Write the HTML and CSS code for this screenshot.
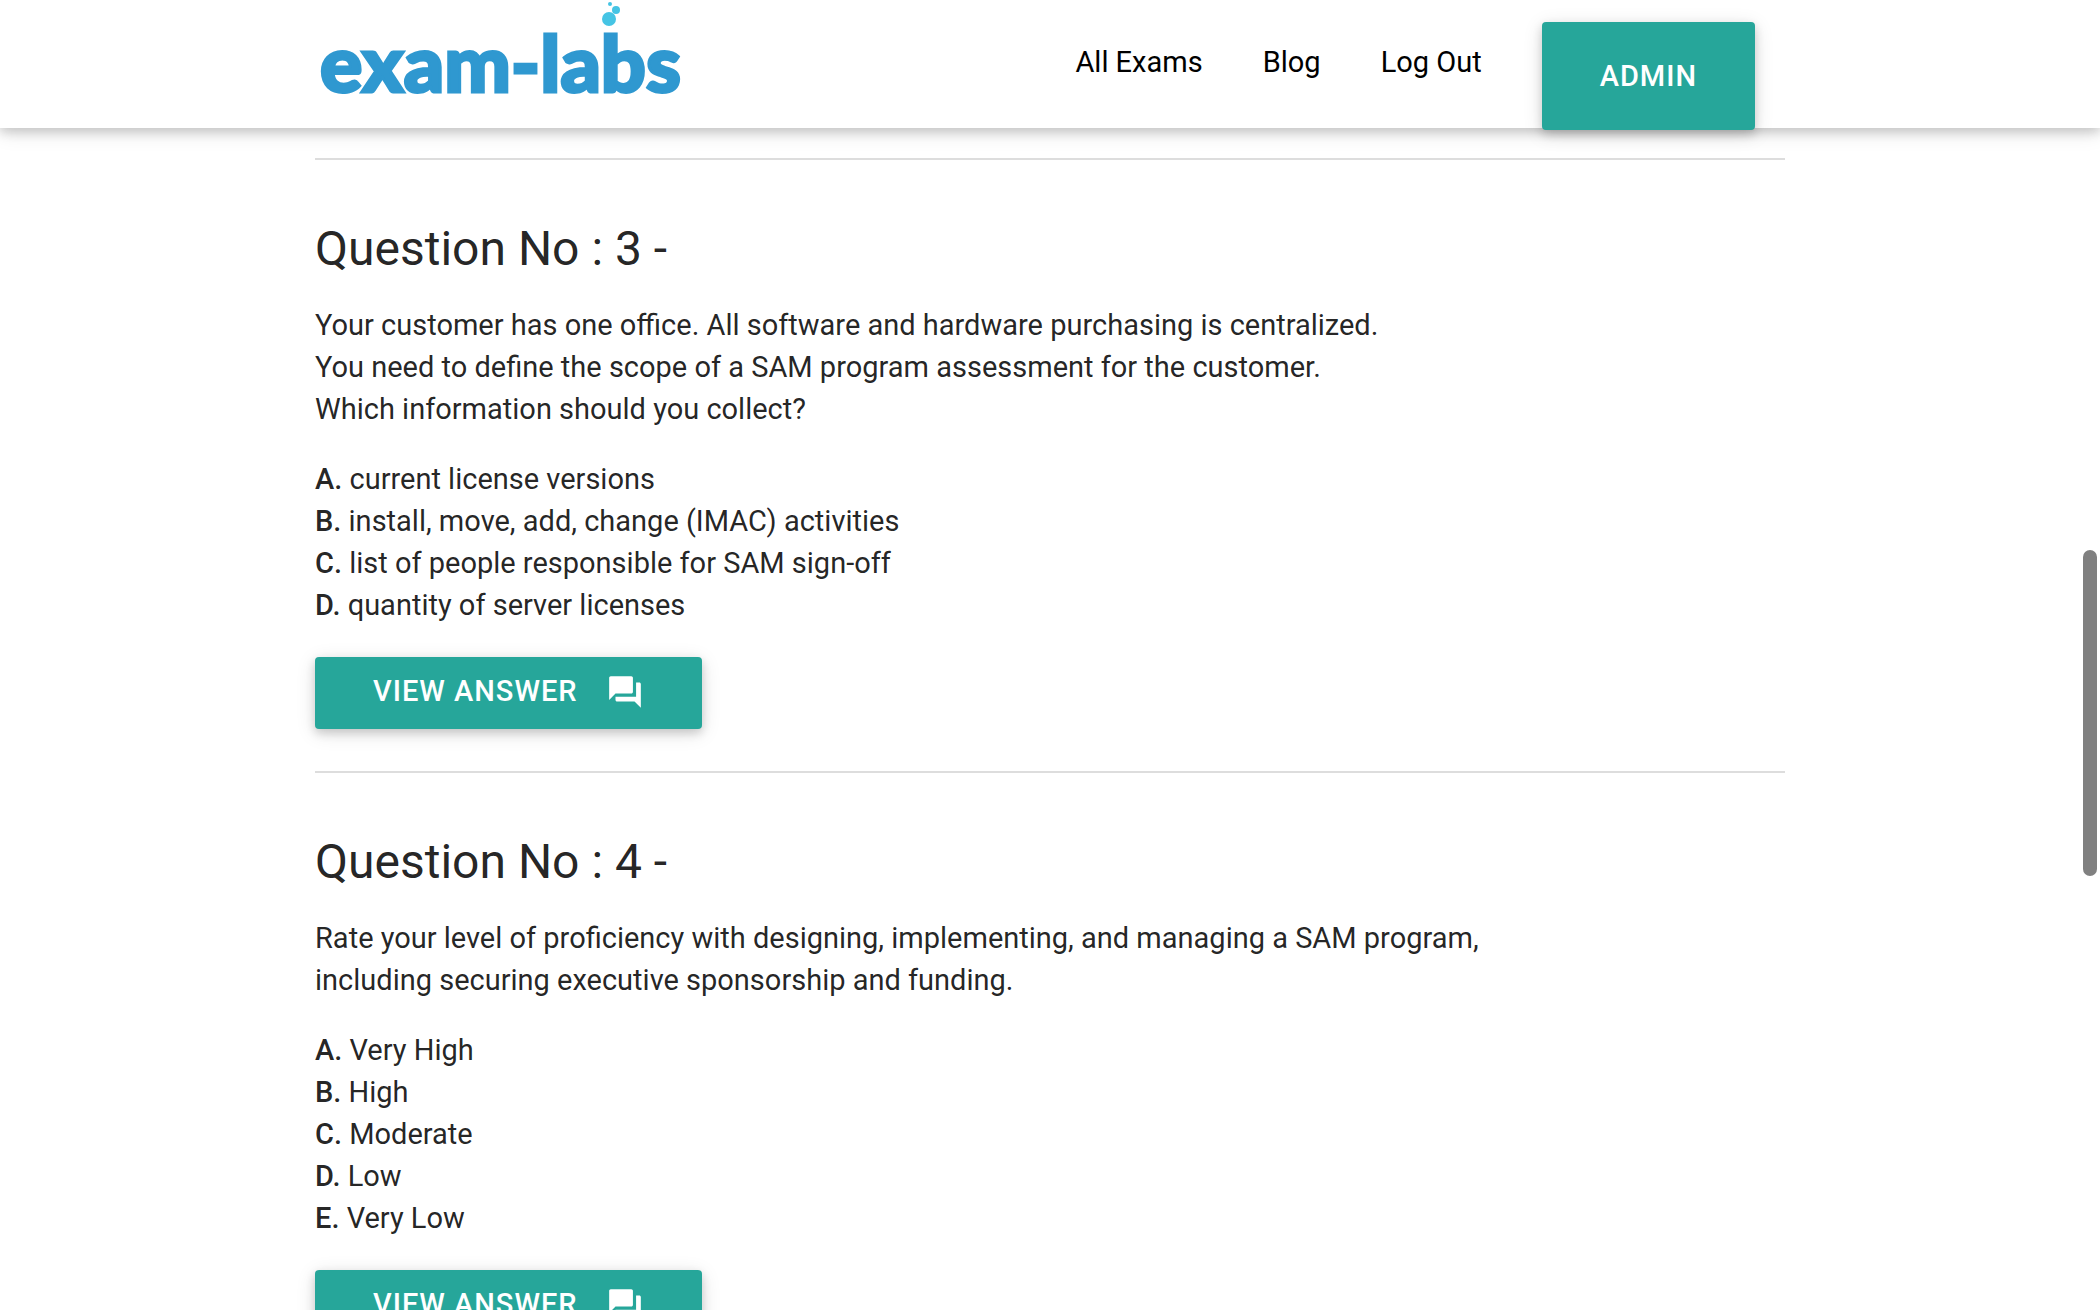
FILE: index.html
```html
<!DOCTYPE html>
<html lang="en">
<head>
    <meta charset="UTF-8">
    <meta name="viewport" content="width=device-width, initial-scale=1.0">
    <title>Exam-Labs</title>
    <link rel="stylesheet" href="styles.css">
</head>
<body>

<header class="navbar">
    <div class="container nav-wrapper">
        <a href="#" class="brand-logo" aria-label="exam-labs">
            <svg width="390" height="128" viewBox="0 0 390 128">
                <text class="logo-text" x="5" y="92">exam-labs</text>
                <circle cx="294" cy="19" r="7" fill="#45c4e4"/>
                <circle cx="301" cy="10" r="4" fill="#45c4e4"/>
                <circle cx="295" cy="4" r="2" fill="#45c4e4"/>
            </svg>
        </a>
        <nav class="nav-links">
            <a href="#">All Exams</a>
            <a href="#">Blog</a>
            <a href="#">Log Out</a>
            <button type="button" class="btn btn-admin">Admin</button>
        </nav>
    </div>
</header>

<main class="container">
    <section class="question">
        <h2>Question No : 3 -</h2>
        <p>
            Your customer has one office. All software and hardware purchasing is centralized.<br>
            You need to define the scope of a SAM program assessment for the customer.<br>
            Which information should you collect?
        </p>
        <p>
            <strong>A.</strong> current license versions<br>
            <strong>B.</strong> install, move, add, change (IMAC) activities<br>
            <strong>C.</strong> list of people responsible for SAM sign-off<br>
            <strong>D.</strong> quantity of server licenses
        </p>
        <button type="button" class="btn btn-answer">
            View Answer
            <svg class="icon" viewBox="0 0 24 24"><path d="M21 6h-2v9H6v2c0 .55.45 1 1 1h11l4 4V7c0-.55-.45-1-1-1zm-4 6V3c0-.55-.45-1-1-1H3c-.55 0-1 .45-1 1v14l4-4h10c.55 0 1-.45 1-1z"/></svg>
        </button>
    </section>

    <section class="question">
        <h2>Question No : 4 -</h2>
        <p>
            Rate your level of proficiency with designing, implementing, and managing a SAM program,<br>
            including securing executive sponsorship and funding.
        </p>
        <p>
            <strong>A.</strong> Very High<br>
            <strong>B.</strong> High<br>
            <strong>C.</strong> Moderate<br>
            <strong>D.</strong> Low<br>
            <strong>E.</strong> Very Low
        </p>
        <button type="button" class="btn btn-answer">
            View Answer
            <svg class="icon" viewBox="0 0 24 24"><path d="M21 6h-2v9H6v2c0 .55.45 1 1 1h11l4 4V7c0-.55-.45-1-1-1zm-4 6V3c0-.55-.45-1-1-1H3c-.55 0-1 .45-1 1v14l4-4h10c.55 0 1-.45 1-1z"/></svg>
        </button>
    </section>
</main>

<div class="scroll-thumb"></div>

</body>
</html>
```
FILE: styles.css
```css
* {
    box-sizing: border-box;
}

body {
    margin: 0;
    height: 100vh;
    overflow: hidden;
    background-color: #fff;
    color: rgba(0, 0, 0, 0.87);
    font-family: Roboto, sans-serif;
    font-size: 29px;
    line-height: 42px;
}

.container {
    width: 70%;
    margin: 0 auto;
}

.navbar {
    position: relative;
    z-index: 10;
    height: 128px;
    background-color: #fff;
    box-shadow: 0 4px 10px 0 rgba(0, 0, 0, 0.16), 0 4px 20px 0 rgba(0, 0, 0, 0.12);
}

.nav-wrapper {
    display: flex;
    justify-content: space-between;
}

.brand-logo svg {
    display: block;
}

.logo-text {
    font-family: Lato, sans-serif;
    font-size: 79px;
    font-weight: 900;
    fill: #2f98d0;
    stroke: #2f98d0;
    stroke-width: 3px;
}

.nav-links {
    display: flex;
    align-items: flex-start;
}

.nav-links a {
    padding: 0 30px;
    color: #000;
    line-height: 124px;
    text-decoration: none;
}

.btn {
    border: none;
    border-radius: 4px;
    padding: 0 58px;
    background-color: #26a69a;
    color: #fff;
    font-family: inherit;
    font-size: 29px;
    font-weight: 500;
    letter-spacing: 1px;
    text-transform: uppercase;
    cursor: pointer;
    box-shadow: 0 4px 10px 0 rgba(0, 0, 0, 0.16), 0 4px 20px 0 rgba(0, 0, 0, 0.12);
}

.btn:hover {
    background-color: #2bbbad;
}

.btn-admin {
    height: 108px;
    margin: 22px 30px 0;
}

.btn-answer {
    display: flex;
    align-items: flex-start;
    height: 72px;
    line-height: 68px;
}

.icon {
    width: 38px;
    height: 38px;
    margin: 16px 0 0 28px;
    fill: #fff;
}

.question {
    margin-top: 30px;
    padding-bottom: 12px;
    border-top: 2px solid #ddd;
}

.question h2 {
    margin: 59px 0 25px;
    font-size: 48px;
    font-weight: 400;
    line-height: 60px;
}

.question p {
    margin: 0 0 28px;
}

.question .btn {
    margin-top: 31px;
}

.question strong {
    font-weight: 500;
}

/* page scroll indicator */
.scroll-thumb {
    position: fixed;
    top: 42%;
    right: 3px;
    width: 14px;
    height: 326px;
    border-radius: 7px;
    background-color: #808080;
}
```
